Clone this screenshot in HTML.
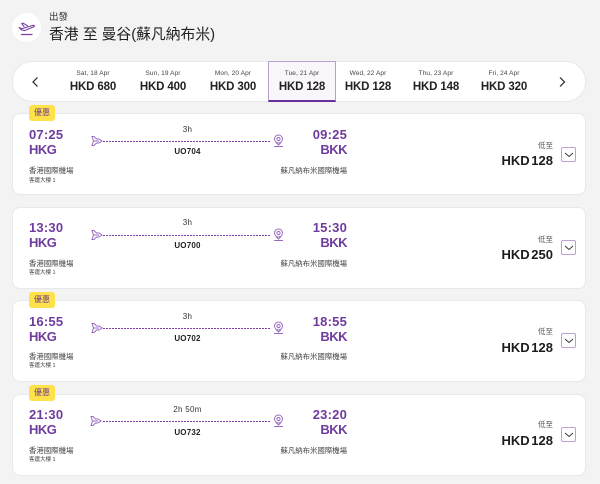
<!DOCTYPE html>
<html><head><meta charset="utf-8">
<style>
*{box-sizing:border-box;margin:0;padding:0}
html,body{width:600px;height:484px;overflow:hidden;background:#f3f3f3;font-family:"Liberation Sans","Noto Sans CJK TC",sans-serif;color:#222}
.a{position:absolute;white-space:nowrap}
.card{position:absolute;left:12px;width:574px;height:82px;background:#fff;border:1px solid #e8e8e8;border-radius:8px}
.tag{position:absolute;left:29px;width:26px;height:16px;background:#ffe24a;border-radius:3px;color:#6b3a8c;font-size:8px;line-height:16px;text-align:center}
.t{position:absolute;font-size:13px;font-weight:bold;color:#6f3b9e;line-height:16px;letter-spacing:.2px}
.c{position:absolute;font-size:13px;font-weight:bold;color:#6f3b9e;line-height:16px;letter-spacing:-.5px}
.nm{position:absolute;font-size:7.4px;line-height:10px;color:#444}
.sm{position:absolute;left:29px;font-size:5.5px;line-height:8px;color:#444}
.dash{position:absolute;left:103px;width:167px;height:1px;background:repeating-linear-gradient(90deg,#7b3fa6 0 2px,transparent 2px 3px)}
.d{position:absolute;left:105px;width:165px;text-align:center;font-size:8px;line-height:10px;color:#333;letter-spacing:.3px}
.f{position:absolute;left:105px;width:165px;text-align:center;font-size:8px;line-height:10px;font-weight:bold;color:#222;letter-spacing:.2px}
.low{position:absolute;right:47px;font-size:7.5px;line-height:10px;color:#555}
.pr{position:absolute;right:47px;font-size:13px;line-height:14px;font-weight:bold;color:#1c1c1c;word-spacing:-2px}
.btn{position:absolute;left:561px;width:15px;height:15px;border:1px solid #b9a3cf;border-radius:2px;background:#fff}
svg{position:absolute;overflow:visible}
.day{position:absolute;top:70px;width:68px;text-align:center}
.day b{display:block;font-size:11.5px;line-height:14px;margin-top:2px;color:#222;letter-spacing:-.15px}
.day span{display:block;font-size:6.5px;line-height:8px;color:#444;letter-spacing:.1px}
</style></head><body>

<div class="a" style="left:12px;top:13px;width:29px;height:29px;border-radius:50%;background:#fff"></div>
<svg style="left:18px;top:21px" width="18" height="15" viewBox="0 0 18 15" fill="none" stroke="#7b3fa6" stroke-width="1.1" stroke-linejoin="round" stroke-linecap="round">
<path d="M1 6.5 L4 7.6 L14 4.6 C16 4 17 4.6 16 5.6 L6.5 9.6 L3.5 8.8 Z"/><path d="M6 5.5 L3.7 2.5 L5.2 2.2 L9.5 4.8"/><path d="M3.5 13.5 H14" stroke-width="1.2"/>
</svg>
<div class="a" style="left:49px;top:12px;font-size:9.5px;line-height:12px;color:#333">出發</div>
<div class="a" style="left:49px;top:25px;font-size:14.8px;line-height:20px;color:#222">香港 至 曼谷(蘇凡納布米)</div>

<div class="a" style="left:12px;top:61px;width:574px;height:41px;background:#fff;border:1px solid #e8e8e8;border-radius:20px"></div>
<div class="a" style="left:268px;top:61px;width:68px;height:41px;background:#f9f7fb;border:1px solid #b7a0cc;border-bottom:2px solid #6a2f9a"></div>
<svg style="left:32px;top:77px" width="7" height="10" fill="none" stroke="#222" stroke-width="1.2"><path d="M5.5 .5 L1 5 L5.5 9.5"/></svg>
<svg style="left:559px;top:77px" width="7" height="10" fill="none" stroke="#222" stroke-width="1.2"><path d="M1 .5 L5.5 5 L1 9.5"/></svg>
<div class="day" style="left:59px"><span>Sat, 18 Apr</span><b>HKD 680</b></div>
<div class="day" style="left:129px"><span>Sun, 19 Apr</span><b>HKD 400</b></div>
<div class="day" style="left:199px"><span>Mon, 20 Apr</span><b>HKD 300</b></div>
<div class="day" style="left:268px"><span>Tue, 21 Apr</span><b>HKD 128</b></div>
<div class="day" style="left:334px"><span>Wed, 22 Apr</span><b>HKD 128</b></div>
<div class="day" style="left:402px"><span>Thu, 23 Apr</span><b>HKD 148</b></div>
<div class="day" style="left:470px"><span>Fri, 24 Apr</span><b>HKD 320</b></div>

<!-- card 1 -->
<div class="card" style="top:113px"></div>
<div class="tag" style="top:105px">優惠</div>
<div class="a" style="left:0;top:113px;width:600px;height:82px">
<div class="t" style="left:29px;top:14px">07:25</div><div class="c" style="left:29px;top:29px">HKG</div>
<div class="t" style="right:253px;top:14px">09:25</div><div class="c" style="right:253px;top:29px">BKK</div>
<div class="nm" style="left:29px;top:53px">香港國際機場</div><div class="sm" style="top:64px">客運大樓 1</div>
<div class="nm" style="right:253px;top:53px">蘇凡納布米國際機場</div>
<div class="d" style="top:12px">3h</div><div class="dash" style="top:28px"></div><div class="f" style="top:34px">UO704</div>
<svg style="left:91px;top:22px" width="12" height="12" fill="none" stroke="#9a6cc0" stroke-width="1"><path d="M1 1.5 H3 L5.5 4 H8 L11 6 L8 8 H5.5 L3 10.5 H1 L2.5 6 Z"/><path d="M2.5 6 H8"/></svg>
<svg style="left:273px;top:21px" width="11" height="14" fill="none" stroke="#9a6cc0" stroke-width="1"><circle cx="5.5" cy="5" r="4"/><circle cx="5.5" cy="5" r="1.6"/><path d="M3 8.5 L5.5 11 L8 8.5 M1 12.5 H10"/></svg>
<div class="low" style="top:28px">低至</div><div class="pr" style="top:41px">HKD 128</div>
<div class="btn" style="top:34px"></div>
<svg style="left:564px;top:39px" width="10" height="6" fill="none" stroke="#333" stroke-width=".9"><path d="M1 1 L5 4.5 L9 1"/></svg>
</div>

<!-- card 2 -->
<div class="card" style="top:207px"></div>
<div class="a" style="left:0;top:207px;width:600px;height:82px">
<div class="t" style="left:29px;top:13px">13:30</div><div class="c" style="left:29px;top:28px">HKG</div>
<div class="t" style="right:253px;top:13px">15:30</div><div class="c" style="right:253px;top:28px">BKK</div>
<div class="nm" style="left:29px;top:52px">香港國際機場</div><div class="sm" style="top:62px">客運大樓 1</div>
<div class="nm" style="right:253px;top:52px">蘇凡納布米國際機場</div>
<div class="d" style="top:11px">3h</div><div class="dash" style="top:28px"></div><div class="f" style="top:34px">UO700</div>
<svg style="left:91px;top:22px" width="12" height="12" fill="none" stroke="#9a6cc0" stroke-width="1"><path d="M1 1.5 H3 L5.5 4 H8 L11 6 L8 8 H5.5 L3 10.5 H1 L2.5 6 Z"/><path d="M2.5 6 H8"/></svg>
<svg style="left:273px;top:21px" width="11" height="14" fill="none" stroke="#9a6cc0" stroke-width="1"><circle cx="5.5" cy="5" r="4"/><circle cx="5.5" cy="5" r="1.6"/><path d="M3 8.5 L5.5 11 L8 8.5 M1 12.5 H10"/></svg>
<div class="low" style="top:28px">低至</div><div class="pr" style="top:41px">HKD 250</div>
<div class="btn" style="top:33px"></div>
<svg style="left:564px;top:38px" width="10" height="6" fill="none" stroke="#333" stroke-width=".9"><path d="M1 1 L5 4.5 L9 1"/></svg>
</div>

<!-- card 3 -->
<div class="card" style="top:300px"></div>
<div class="tag" style="top:292px">優惠</div>
<div class="a" style="left:0;top:300px;width:600px;height:82px">
<div class="t" style="left:29px;top:14px">16:55</div><div class="c" style="left:29px;top:29px">HKG</div>
<div class="t" style="right:253px;top:14px">18:55</div><div class="c" style="right:253px;top:29px">BKK</div>
<div class="nm" style="left:29px;top:52px">香港國際機場</div><div class="sm" style="top:62px">客運大樓 1</div>
<div class="nm" style="right:253px;top:52px">蘇凡納布米國際機場</div>
<div class="d" style="top:12px">3h</div><div class="dash" style="top:28px"></div><div class="f" style="top:34px">UO702</div>
<svg style="left:91px;top:22px" width="12" height="12" fill="none" stroke="#9a6cc0" stroke-width="1"><path d="M1 1.5 H3 L5.5 4 H8 L11 6 L8 8 H5.5 L3 10.5 H1 L2.5 6 Z"/><path d="M2.5 6 H8"/></svg>
<svg style="left:273px;top:21px" width="11" height="14" fill="none" stroke="#9a6cc0" stroke-width="1"><circle cx="5.5" cy="5" r="4"/><circle cx="5.5" cy="5" r="1.6"/><path d="M3 8.5 L5.5 11 L8 8.5 M1 12.5 H10"/></svg>
<div class="low" style="top:27px">低至</div><div class="pr" style="top:41px">HKD 128</div>
<div class="btn" style="top:33px"></div>
<svg style="left:564px;top:38px" width="10" height="6" fill="none" stroke="#333" stroke-width=".9"><path d="M1 1 L5 4.5 L9 1"/></svg>
</div>

<!-- card 4 -->
<div class="card" style="top:394px"></div>
<div class="tag" style="top:385px">優惠</div>
<div class="a" style="left:0;top:394px;width:600px;height:82px">
<div class="t" style="left:29px;top:13px">21:30</div><div class="c" style="left:29px;top:28px">HKG</div>
<div class="t" style="right:253px;top:13px">23:20</div><div class="c" style="right:253px;top:28px">BKK</div>
<div class="nm" style="left:29px;top:52px">香港國際機場</div><div class="sm" style="top:62px">客運大樓 1</div>
<div class="nm" style="right:253px;top:52px">蘇凡納布米國際機場</div>
<div class="d" style="top:11px">2h 50m</div><div class="dash" style="top:27px"></div><div class="f" style="top:34px">UO732</div>
<svg style="left:90px;top:21px" width="12" height="12" fill="none" stroke="#9a6cc0" stroke-width="1"><path d="M1 1.5 H3 L5.5 4 H8 L11 6 L8 8 H5.5 L3 10.5 H1 L2.5 6 Z"/><path d="M2.5 6 H8"/></svg>
<svg style="left:273px;top:20px" width="11" height="14" fill="none" stroke="#9a6cc0" stroke-width="1"><circle cx="5.5" cy="5" r="4"/><circle cx="5.5" cy="5" r="1.6"/><path d="M3 8.5 L5.5 11 L8 8.5 M1 12.5 H10"/></svg>
<div class="low" style="top:26px">低至</div><div class="pr" style="top:40px">HKD 128</div>
<div class="btn" style="top:33px"></div>
<svg style="left:564px;top:38px" width="10" height="6" fill="none" stroke="#333" stroke-width=".9"><path d="M1 1 L5 4.5 L9 1"/></svg>
</div>

</body></html>
